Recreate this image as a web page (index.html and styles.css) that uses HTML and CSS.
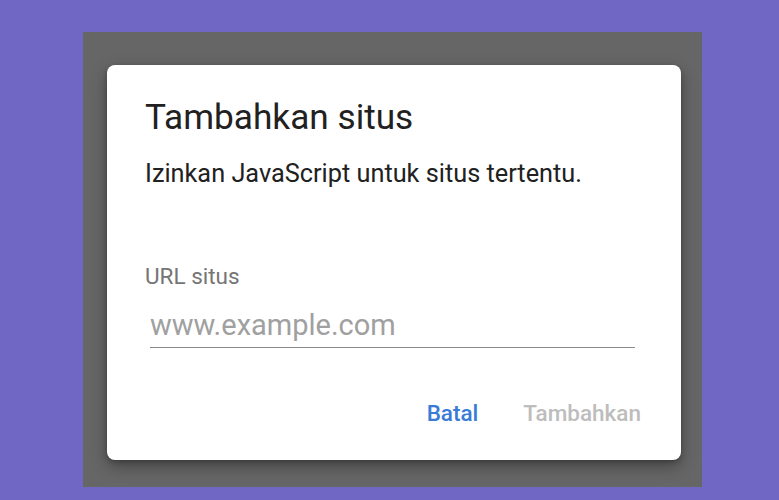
FILE: index.html
```html
<!DOCTYPE html>
<html lang="id">
<head>
<meta charset="utf-8">
<title>Tambahkan situs</title>
<link rel="stylesheet" href="styles.css">
</head>
<body>
<div class="scrim">
  <div class="dialog">
    <h1 class="title">Tambahkan situs</h1>
    <p class="desc">Izinkan JavaScript untuk situs tertentu.</p>
    <div class="field">
      <label class="label" for="url">URL situs</label>
      <input class="input" id="url" type="text" placeholder="www.example.com">
    </div>
    <div class="actions">
      <button class="btn btn-primary">Batal</button>
      <button class="btn btn-disabled">Tambahkan</button>
    </div>
  </div>
</div>
</body>
</html>
```

FILE: styles.css
```css
html, body {
  margin: 0;
  padding: 0;
}
body {
  background: #6f67c3;
  width: 779px;
  height: 500px;
  overflow: hidden;
  font-family: Roboto, "Noto Sans", sans-serif;
  padding: 32px 0 0 83px;
  box-sizing: border-box;
}
.scrim {
  width: 619px;
  height: 455px;
  background: #666666;
  padding: 33px 0 0 24px;
  box-sizing: border-box;
}
.dialog {
  width: 574px;
  height: 395px;
  background: #ffffff;
  border-radius: 8px;
  box-shadow: 0 6px 16px rgba(0,0,0,0.35), 0 2px 4px rgba(0,0,0,0.2);
  box-sizing: border-box;
  padding: 0 40px 0 38px;
  display: flex;
  flex-direction: column;
}
.title {
  margin: 32px 0 0;
  font-size: 35.2px;
  font-weight: 400;
  line-height: 40px;
  color: #212121;
}
.desc {
  margin: 22px 0 0;
  font-size: 25.3px;
  line-height: 30px;
  color: #212121;
}
.field {
  margin: 73px 6px 0 0;
  display: flex;
  flex-direction: column;
}
.label {
  font-size: 22.5px;
  line-height: 28px;
  color: #757575;
}
.input {
  margin: 18px 0 0 5px;
  padding: 0 0 5px;
  height: 40px;
  box-sizing: border-box;
  border: none;
  border-bottom: 1px solid #8a8a8a;
  outline: none;
  font-family: Roboto, "Noto Sans", sans-serif;
  font-size: 29px;
  line-height: 34px;
  color: #212121;
  background: transparent;
}
.input::placeholder {
  color: #a0a0a0;
}
.actions {
  margin-top: 51px;
  display: flex;
  justify-content: flex-end;
  gap: 45px;
}
.btn {
  border: none;
  background: none;
  padding: 0;
  font-family: Roboto, "Noto Sans", sans-serif;
  font-size: 22.5px;
  font-weight: 500;
  line-height: 28px;
}
.btn-primary {
  color: #3a7bd5;
}
.btn-disabled {
  color: #bdbdbd;
}
```
